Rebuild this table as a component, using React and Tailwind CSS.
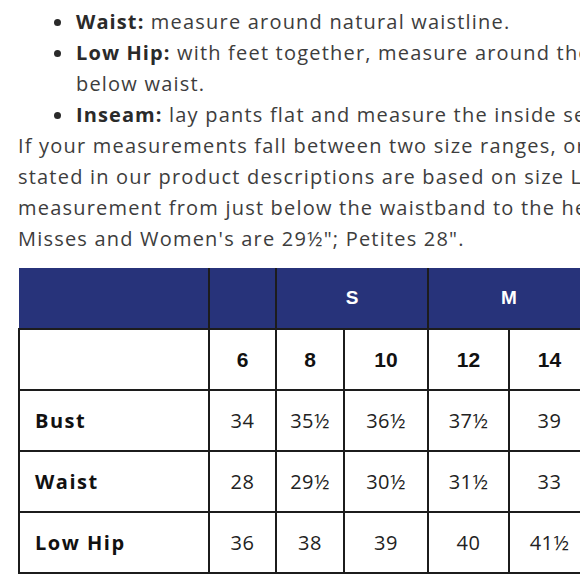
import React from 'react'

const body = { fontFamily: '"Open Sans", "Noto Sans", sans-serif' }
const arial = { fontFamily: '"Liberation Sans", Arial, sans-serif' }

const sizes = ['6', '8', '10', '12', '14', '16', '18']
const widths = [190, 67, 68, 84, 81, 81, 80, 80]

const rows = [
  { label: 'Bust', values: ['34', '35½', '36½', '37½', '39', '40½', '42'] },
  { label: 'Waist', values: ['28', '29½', '30½', '31½', '33', '34½', '36'] },
  { label: 'Low Hip', values: ['36', '38', '39', '40', '41½', '43', '44½'] },
]

function Bullet({ label, children }) {
  return (
    <li className="flex items-start">
      <span className="w-[76px] shrink-0 flex justify-end pr-[15px] pt-[13px]">
        <span className="block w-[7px] h-[7px] rounded-full bg-[#2a2a2a]" />
      </span>
      <span className="whitespace-nowrap">
        <b className="font-bold text-[#2a2a2a] tracking-[1.1px]">{label}</b> {children}
      </span>
    </li>
  )
}

export default function App() {
  return (
    <div className="w-[580px] h-[580px] overflow-hidden bg-white">
      <div className="w-[1100px] pt-[6px]" style={body}>
        <ul className="text-[20px] leading-[31px] text-[#3d3d3d] tracking-[1.2px]">
          <Bullet label="Waist:">measure around natural waistline.</Bullet>
          <Bullet label="Low Hip:">
            with feet together, measure around the fullest part of hips, approximately 8"
            <br />
            below waist.
          </Bullet>
          <Bullet label="Inseam:">lay pants flat and measure the inside seam from crotch to hem.</Bullet>
        </ul>
        <p className="pl-[18px] text-[20px] leading-[31px] text-[#3d3d3d] tracking-[1.2px] whitespace-nowrap">
          If your measurements fall between two size ranges, order the larger size. Inseams
          <br />
          stated in our product descriptions are based on size L. The inseam is the
          <br />
          measurement from just below the waistband to the hem. Most regular inseams for
          <br />
          Misses and Women's are 29½"; Petites 28".
        </p>

        <table className="ml-[18px] mt-[14px] border-collapse table-fixed">
          <colgroup>
            {widths.map((w, i) => (
              <col key={i} style={{ width: w }} />
            ))}
          </colgroup>
          <thead>
            <tr className="h-[61px] bg-[#27337a]" style={arial}>
              <th className="border-b-2 border-r-2 border-[#1c1c1c]" />
              <th className="border-2 border-t-0 border-[#1c1c1c]" />
              <th colSpan={2} className="border-2 border-t-0 border-[#1c1c1c] text-white text-[19px] font-bold">S</th>
              <th colSpan={2} className="border-2 border-t-0 border-[#1c1c1c] text-white text-[19px] font-bold">M</th>
              <th colSpan={2} className="border-2 border-t-0 border-[#1c1c1c] text-white text-[19px] font-bold">L</th>
            </tr>
            <tr className="h-[61px]" style={arial}>
              <th className="border-2 border-[#1c1c1c]" />
              {sizes.map((s) => (
                <th key={s} className="border-2 border-[#1c1c1c] text-[21px] font-bold text-[#111]">
                  {s}
                </th>
              ))}
            </tr>
          </thead>
          <tbody>
            {rows.map((r) => (
              <tr key={r.label} className="h-[61px]">
                <td className="border-2 border-[#1c1c1c] pl-[15px] text-[20px] font-bold text-[#111] tracking-[1.5px]">
                  {r.label}
                </td>
                {r.values.map((v, i) => (
                  <td key={i} className="border-2 border-[#1c1c1c] text-center text-[20px] text-[#222] tracking-[0.5px]">
                    {v}
                  </td>
                ))}
              </tr>
            ))}
          </tbody>
        </table>
      </div>
    </div>
  )
}
